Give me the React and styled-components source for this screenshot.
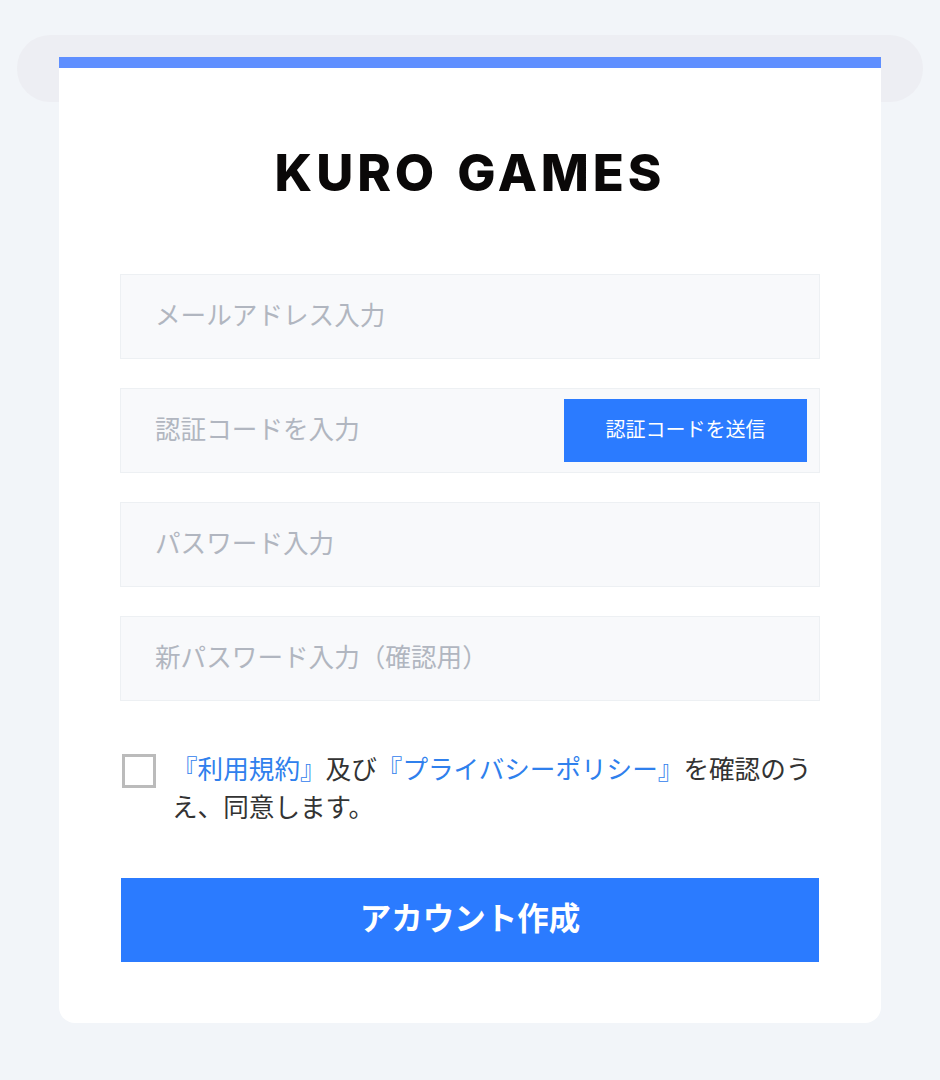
import React from 'react';
import styled, { createGlobalStyle } from 'styled-components';

const GlobalStyle = createGlobalStyle`
    html, body {
        margin:0;
        padding:0;
        background:#f2f5f9;
    }
    * {
        box-sizing:border-box;
    }
`

const FONT = `"Noto Sans CJK JP", "Noto Sans", sans-serif`;

const App = () => {
    return(
        <>
            <GlobalStyle />
            <Page>
                <Band />
                <Card>
                    <TopBar />
                    <Body>
                        <Logo>KURO GAMES</Logo>
                        <Form>
                            <Field>
                                <Input placeholder='メールアドレス入力' />
                            </Field>
                            <Field>
                                <Input placeholder='認証コードを入力' />
                                <SendButton type='button'>認証コードを送信</SendButton>
                            </Field>
                            <Field>
                                <Input type='password' placeholder='パスワード入力' />
                            </Field>
                            <Field>
                                <Input type='password' placeholder='新パスワード入力（確認用）' />
                            </Field>
                        </Form>
                        <Agreement>
                            <CheckBox type='checkbox' />
                            <AgreementText>
                                <Link>『利用規約』</Link>及び<Link>『プライバシーポリシー』</Link>を確認のう<br />え、同意します。
                            </AgreementText>
                        </Agreement>
                        <SubmitButton type='button'>アカウント作成</SubmitButton>
                    </Body>
                </Card>
            </Page>
        </>
    )
}

export default App;

const Page = styled.div`
    width:940px;
    height:1080px;
    padding-top:35px;
    background:#f2f5f9;
    font-family:${FONT};
    overflow:hidden;
`

const Band = styled.div`
    width:906px;
    height:67px;
    margin:0 auto;
    background:#edeef3;
    border-radius:33px;
`

const Card = styled.div`
    width:822px;
    height:966px;
    margin:-45px auto 0;
    background:#fff;
    border-radius:0 0 16px 16px;
    overflow:hidden;
`

const TopBar = styled.div`
    height:11px;
    background:#5f8fff;
`

const Body = styled.div`
    display:flex;
    flex-direction:column;
    padding:0 61px;
`

const Logo = styled.div`
    margin-top:75px;
    height:60px;
    font-family:"Inter", sans-serif;
    font-size:51px;
    font-weight:800;
    line-height:60px;
    letter-spacing:3.9px;
    word-spacing:4px;
    text-align:center;
    white-space:nowrap;
    color:#0a0808;
`

const Form = styled.div`
    display:flex;
    flex-direction:column;
    gap:29px;
    margin-top:71px;
`

const Field = styled.div`
    display:flex;
    align-items:center;
    width:700px;
    height:85px;
    padding-right:12px;
    background:#f8f9fb;
    border:1px solid #edf0f3;
`

const Input = styled.input`
    flex:1;
    min-width:0;
    height:100%;
    padding:0 0 6px 34px;
    border:none;
    outline:none;
    background:transparent;
    font-family:${FONT};
    font-size:25.6px;
    color:#333;

    &::placeholder {
        color:#b1b6c0;
        opacity:1;
    }
`

const SendButton = styled.button`
    flex:none;
    width:243px;
    height:63px;
    padding:0 0 4px;
    border:none;
    background:#2b7bff;
    color:#fff;
    font-family:${FONT};
    font-size:20px;
`

const Agreement = styled.div`
    display:flex;
    align-items:flex-start;
    margin-top:52px;
`

const CheckBox = styled.input`
    appearance:none;
    flex:none;
    width:34px;
    height:34px;
    margin:1px 16px 0 2px;
    background:#fff;
    border:3px solid #bbb;
`

const AgreementText = styled.p`
    width:648px;
    margin:-4px 0 0;
    font-size:25.6px;
    line-height:38px;
    color:#333;
    text-spacing-trim:space-all;
`

const Link = styled.span`
    color:#2f80ed;
`

const SubmitButton = styled.button`
    width:698px;
    height:84px;
    margin:53px 0 0 1px;
    padding:0 0 8px;
    border:none;
    background:#2b7bff;
    color:#fff;
    font-family:${FONT};
    font-size:31.5px;
    font-weight:700;
`
